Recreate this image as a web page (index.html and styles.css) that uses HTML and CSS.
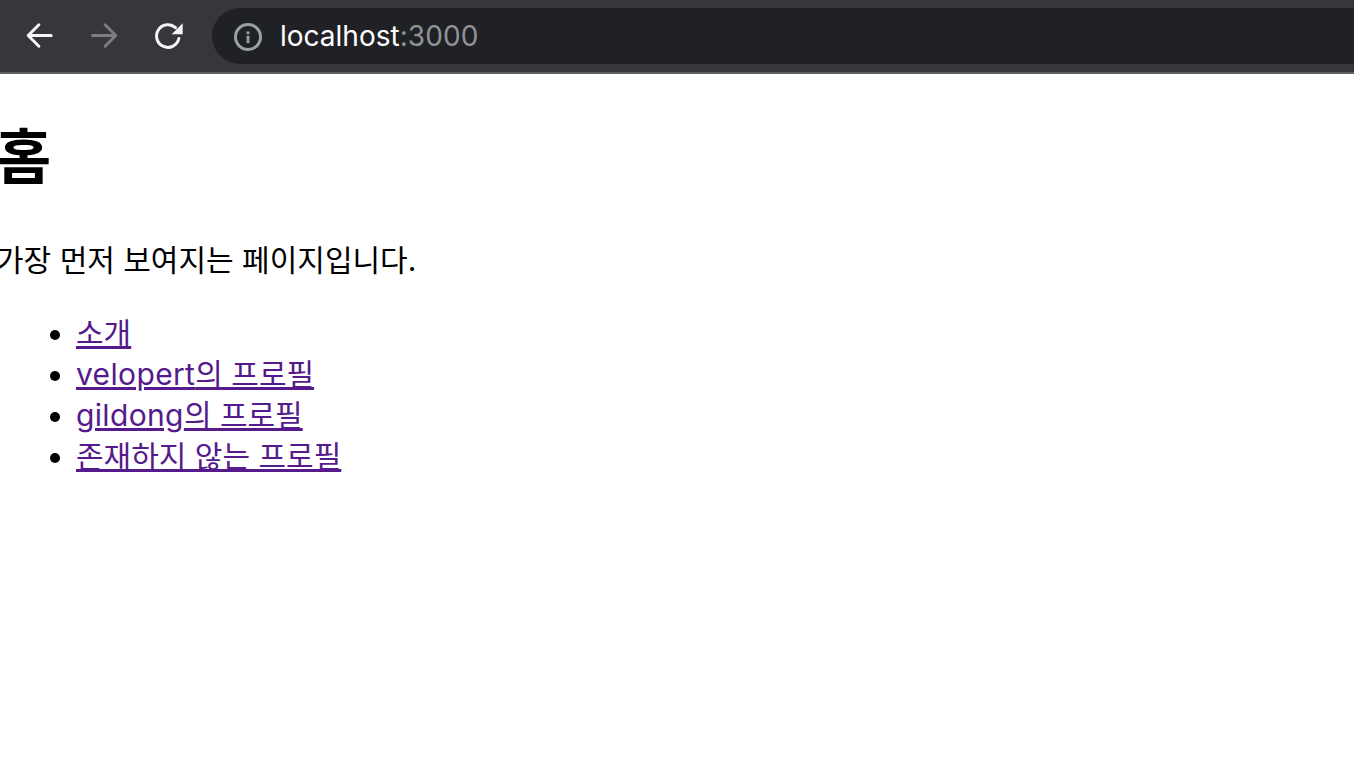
FILE: index.html
```html
<!DOCTYPE html>
<html lang="ko">
<head>
<meta charset="UTF-8">
<title>localhost:3000</title>
<link rel="stylesheet" href="styles.css">
</head>
<body>

<div class="toolbar">
<button class="nav-btn">
<svg width="32" height="32" viewBox="0 0 32 32"><path d="M27.200 15.500H4.200M14.900 4.800L4.200 15.500l10.700 10.700" class="icon-line"/></svg>
</button>
<button class="nav-btn disabled">
<svg width="32" height="32" viewBox="0 0 32 32"><path d="M4.500 15.500H27.800M17.100 4.800L27.800 15.500 17.100 26.200" class="icon-line"/></svg>
</button>
<button class="nav-btn">
<svg width="32" height="32" viewBox="0 0 32 32"><path d="M26.900 18.500A11.300 11.300 0 1 1 23.500 7.700" class="icon-line"/><path d="M30.700 3.300V14.300H19.700z" class="icon-fill"/></svg>
</button>
<div class="omnibox">
<svg class="info-icon" width="28" height="28" viewBox="0 0 28 28"><circle cx="14" cy="14" r="12.500" class="info-ring"/><rect x="12.600" y="12.800" width="2.800" height="7.400" class="info-mark"/><rect x="12.600" y="8.400" width="2.800" height="2.800" class="info-mark"/></svg>
<span class="host">localhost</span><span class="port">:3000</span>
</div>
</div>

<div class="page">
<h1>홈</h1>
<p>가장 먼저 보여지는 페이지입니다.</p>
<ul>
<li><a href="#">소개</a></li>
<li><a href="#"><span class="latin">velopert</span>의 프로필</a></li>
<li><a href="#"><span class="latin">gildong</span>의 프로필</a></li>
<li><a href="#">존재하지 않는 프로필</a></li>
</ul>
</div>

</body>
</html>
```

FILE: styles.css
```css
body{
margin:0;
background:white;
font-family:Inter,"Noto Sans CJK KR",sans-serif;
overflow:hidden;
}

.toolbar{
height:72px;
display:flex;
align-items:flex-start;
background:#36373b;
border-bottom:2px solid #5f6064;
padding-left:8px;
}

.nav-btn{
width:64px;
height:56px;
margin-top:8px;
padding:0;
border:none;
background:none;
display:flex;
justify-content:center;
align-items:center;
}

.icon-line{
fill:none;
stroke:#f4f5f6;
stroke-width:3;
stroke-linecap:round;
stroke-linejoin:round;
}

.icon-fill{
fill:#f4f5f6;
}

.disabled .icon-line{
stroke:#7c7d80;
}

.omnibox{
flex:1;
height:56px;
margin-top:8px;
margin-left:12px;
padding-left:22px;
background:#202124;
border-radius:28px 0 0 28px;
display:flex;
align-items:center;
font-size:28px;
}

.info-icon{
margin-top:2px;
margin-right:18px;
}

.info-ring{
fill:none;
stroke:#9aa0a6;
stroke-width:3;
}

.info-mark{
fill:#9aa0a6;
}

.host{
color:white;
}

.port{
color:#8f9296;
letter-spacing:0.1px;
}

.page{
margin-left:-4px;
color:black;
font-size:30px;
line-height:41px;
}

h1{
font-size:60px;
line-height:73px;
margin:0;
padding-top:47px;
}

p{
margin:0;
padding-top:46px;
}

ul{
margin:0;
padding:32px 0 0 80px;
}

a{
color:#551a8b;
text-decoration-thickness:3px;
}

.latin{
letter-spacing:0.35px;
}
```
